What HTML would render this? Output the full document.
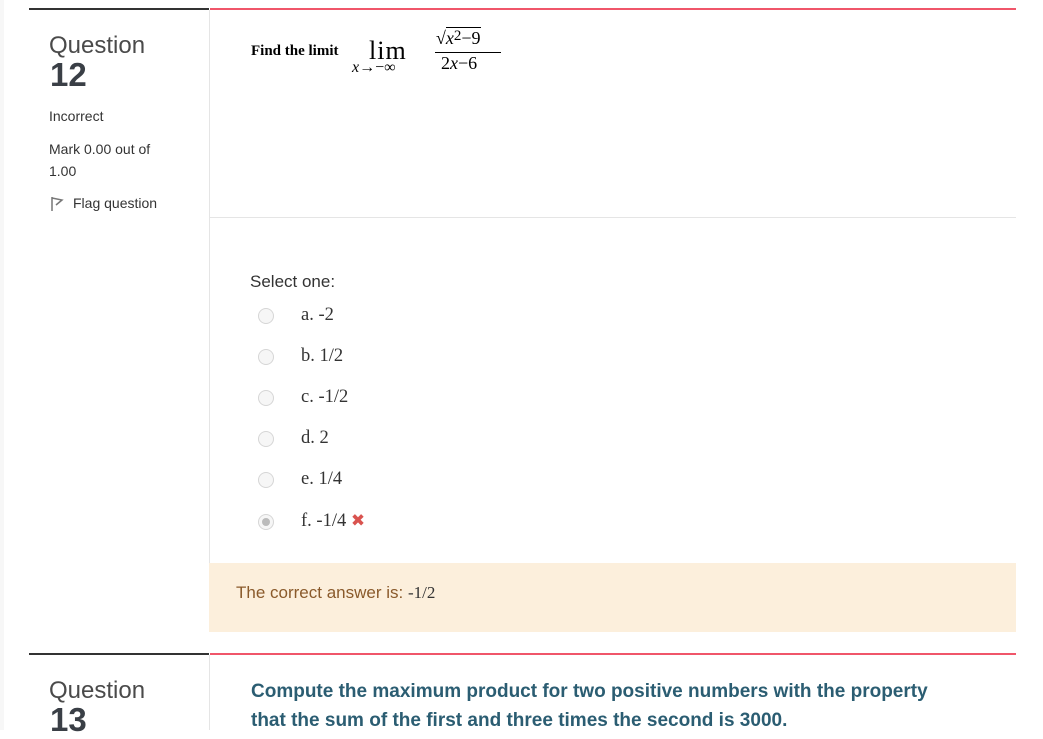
<!DOCTYPE html>
<html><head><style>
body{margin:0;width:1043px;height:730px;overflow:hidden;background:#fff;font-family:"Liberation Sans",sans-serif;position:relative}
.a{position:absolute}
.lato{font-family:"Liberation Sans",sans-serif;color:#333}
.opt{position:absolute;left:258px;font-size:18.5px;color:#333}
.rad{position:absolute;left:0;top:0;width:14px;height:14px;border:1px solid #d6d6d6;border-radius:50%;background:#f6f6f6}
.opt span{position:absolute;left:43px;top:-3px;white-space:nowrap;font-family:"Liberation Serif",serif}
</style></head><body>
<div class="a" style="left:0;top:0;width:4px;height:730px;background:#f7f7f7"></div>
<div class="a" style="left:29px;top:8px;width:180px;height:2px;background:#333"></div>
<div class="a" style="left:210px;top:8px;width:806px;height:2px;background:#f0566a"></div>
<div class="a" style="left:209px;top:10px;width:1px;height:553px;background:#e5e5e5"></div>
<div class="a" style="left:210px;top:217px;width:806px;height:1px;background:#e5e5e5"></div>
<div class="a lato" style="left:49px;top:32px;font-size:24px;color:#4a4a4a">Question</div>
<div class="a" style="left:50px;top:56px;font-size:33px;font-weight:bold;color:#3a3f46">12</div>
<div class="a lato" style="left:49px;top:108px;font-size:14px">Incorrect</div>
<div class="a lato" style="left:49px;top:138px;font-size:14px;line-height:22px">Mark 0.00 out of<br>1.00</div>
<svg class="a" style="left:50px;top:196px" width="14" height="16" viewBox="0 0 14 16"><path d="M2 1v14M2 2l10 2-6 5" fill="none" stroke="#777" stroke-width="1.5"/></svg>
<div class="a lato" style="left:73px;top:195px;font-size:14px">Flag question</div>
<div class="a" style="left:251px;top:43px;font-family:'Liberation Serif',serif;font-weight:bold;font-size:15px;color:#000">Find the limit</div>
<div class="a" style="left:369px;top:36px;font-family:'Liberation Serif',serif;font-size:26px;color:#000;letter-spacing:1px">lim</div>
<div class="a" style="left:352px;top:59px;font-family:'Liberation Serif',serif;font-size:16px;color:#000;font-style:italic">x<span style="font-style:normal">→−∞</span></div>
<div class="a" style="left:436px;top:28px;font-family:'Liberation Serif',serif;font-size:18px;color:#000;white-space:nowrap">√<span style="border-top:1px solid #000"><i>x</i><sup style="font-size:15px;vertical-align:4px">2</sup>−9</span></div>
<div class="a" style="left:435px;top:52px;width:66px;height:1px;background:#000"></div>
<div class="a" style="left:441px;top:53px;font-family:'Liberation Serif',serif;font-size:18px;color:#000">2<i>x</i>−6</div>
<div class="a lato" style="left:250px;top:272px;font-size:17px">Select one:</div>
<div class="opt" style="top:308px"><div class="rad"></div><span>a. -2</span></div>
<div class="opt" style="top:349px"><div class="rad"></div><span>b. 1/2</span></div>
<div class="opt" style="top:390px"><div class="rad"></div><span>c. -1/2</span></div>
<div class="opt" style="top:431px"><div class="rad"></div><span>d. 2</span></div>
<div class="opt" style="top:472px"><div class="rad"></div><span>e. 1/4</span></div>
<div class="opt" style="top:514px"><div class="rad"><div style="position:absolute;left:3px;top:3px;width:8px;height:8px;border-radius:50%;background:#bbb"></div></div><span>f. -1/4 <b style="color:#d9534f;font-family:'DejaVu Sans';font-size:17px">✖</b></span></div>
<div class="a" style="left:209px;top:563px;width:807px;height:69px;background:#fcefdc"></div>
<div class="a" style="left:236px;top:583px;font-size:17px;color:#8a5a2b">The correct answer is: <span style="font-family:'Liberation Serif',serif;color:#333">-1/2</span></div>
<div class="a" style="left:29px;top:653px;width:180px;height:2px;background:#333"></div>
<div class="a" style="left:210px;top:653px;width:806px;height:2px;background:#f0566a"></div>
<div class="a" style="left:209px;top:655px;width:1px;height:75px;background:#e5e5e5"></div>
<div class="a lato" style="left:49px;top:677px;font-size:24px;color:#4a4a4a">Question</div>
<div class="a" style="left:50px;top:701px;font-size:33px;font-weight:bold;color:#3a3f46">13</div>
<div class="a" style="left:251px;top:677px;font-size:19px;font-weight:bold;color:#2b5d72;line-height:29px;white-space:nowrap">Compute the maximum product for two positive numbers with the property<br>that the sum of the first and three times the second is 3000.</div>
</body></html>
